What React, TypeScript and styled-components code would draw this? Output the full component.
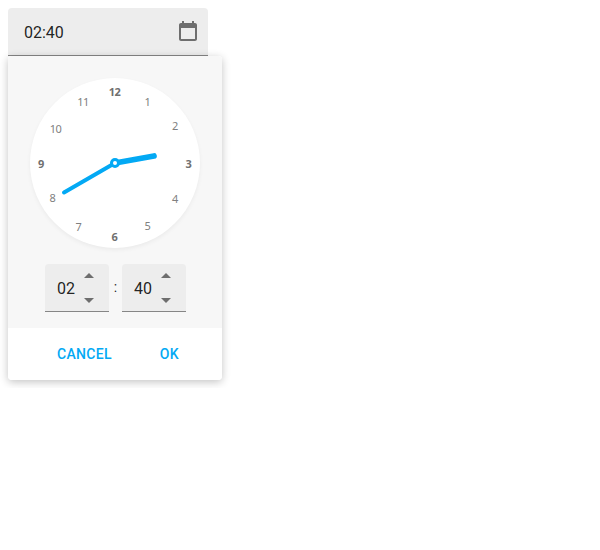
import React from "react";
import styled, { createGlobalStyle } from "styled-components";

const GlobalStyle = createGlobalStyle`
  * { box-sizing: border-box; }
  body { margin: 0; background: #fff; font-family: Roboto, sans-serif; color: rgba(0, 0, 0, 0.87); }
`;

const Page = styled.main`
  display: flex;
  flex-direction: column;
  align-items: flex-start;
  padding: 8px;
`;

const Field = styled.div`
  display: flex;
  align-items: center;
  justify-content: space-between;
  width: 200px;
  height: 48px;
  padding: 0 8px 0 16px;
  background: #ededed;
  border-bottom: 1px solid #868686;
  border-radius: 4px 4px 0 0;
  font-size: 16px;
  line-height: 24px;
`;

const Value = styled.span`
  padding-top: 2px;
`;

const CalendarIcon = styled.svg`
  display: block;
  width: 24px;
  height: 24px;
`;

const Popup = styled.section`
  width: 214px;
  height: 324px;
  background: #fff;
  border-radius: 4px;
  overflow: hidden;
`;

const PopupShadow = styled.div`
  border-radius: 4px;
  box-shadow: 0 2px 8px rgba(0, 0, 0, 0.24);
`;

const TimeView = styled.div`
  display: flex;
  flex-direction: column;
  align-items: center;
  gap: 16px;
  height: 272px;
  padding-top: 22px;
  background: #f7f7f7;
`;

const Dial = styled.svg`
  display: block;
  width: 170px;
  height: 170px;
  border-radius: 50%;
  background: #fff;
  box-shadow: 0 2px 4px rgba(0, 0, 0, 0.05);
`;

const Numeral = styled.text<{ $strong?: boolean }>`
  font-family: "Noto Sans", sans-serif;
  font-size: 11px;
  font-weight: ${({ $strong }) => ($strong ? 700 : 400)};
  fill: ${({ $strong }) => ($strong ? "#707070" : "#808080")};
  letter-spacing: -0.5px;
  text-anchor: middle;
`;

const Spinners = styled.div`
  display: flex;
  align-items: stretch;
  height: 48px;
  padding-left: 1px;
`;

const Separator = styled.span`
  width: 13px;
  padding-top: 13px;
  font-size: 14px;
  line-height: 20px;
  text-align: center;
`;

const NumberBox = styled.div`
  display: flex;
  align-items: center;
  width: 64px;
  padding-left: 12px;
  background: #ededed;
  border-bottom: 1px solid #868686;
  border-radius: 4px 4px 0 0;
  font-size: 16px;
  line-height: 24px;
`;

const Arrows = styled.svg`
  display: block;
  width: 10px;
  height: 30px;
  margin-left: 9px;
`;

const Actions = styled.footer`
  display: flex;
  align-items: center;
  height: 52px;
  padding-left: 49px;
  gap: 48px;
`;

const TextButton = styled.button`
  padding: 0;
  border: 0;
  background: none;
  color: #03a9f4;
  font: 500 14px/20px Roboto, sans-serif;
  letter-spacing: 0.3px;
  text-transform: uppercase;
`;

const numerals = [
  { n: 12, x: 84.5, y: 17.5 },
  { n: 1, x: 117.3, y: 28 },
  { n: 2, x: 144.8, y: 52 },
  { n: 3, x: 158.3, y: 90.3 },
  { n: 4, x: 144.8, y: 125 },
  { n: 5, x: 117.3, y: 152 },
  { n: 6, x: 84.3, y: 162.6 },
  { n: 7, x: 48.3, y: 153.4 },
  { n: 8, x: 22.3, y: 124.2 },
  { n: 9, x: 11, y: 90.3 },
  { n: 10, x: 25.5, y: 55 },
  { n: 11, x: 53, y: 28 },
];

function Clock() {
  return (
    <Dial viewBox="0 0 170 170">
      {numerals.map(({ n, x, y }) => (
        <Numeral key={n} x={x} y={y} $strong={n % 3 === 0}>{n}</Numeral>
      ))}
      <g stroke="#03a9f4" strokeLinecap="round">
        <path d="M85 85L124 78" strokeWidth="5.7" />
        <path d="M85 85L34 114.5" strokeWidth="4" />
        <circle cx="85" cy="85" r="3.5" fill="#fff" strokeWidth="3" />
      </g>
    </Dial>
  );
}

function Spinner({ value }: { value: string }) {
  return (
    <NumberBox>
      <Value>{value}</Value>
      <Arrows viewBox="0 0 10 30" fill="#6e6e6e">
        <path d="M0 5L5 0L10 5Z" />
        <path d="M0 25L5 30L10 25Z" />
      </Arrows>
    </NumberBox>
  );
}

export default function App() {
  return (
    <Page>
      <GlobalStyle />
      <Field>
        <Value>02:40</Value>
        <CalendarIcon viewBox="0 0 24 24" fill="#6e6e6e">
          <path d="M19 3h-1V1h-2v2H8V1H6v2H5c-1.1 0-2 .9-2 2v14c0 1.1.9 2 2 2h14c1.1 0 2-.9 2-2V5c0-1.1-.9-2-2-2zm0 16H5V8h14v11z" />
        </CalendarIcon>
      </Field>
      <PopupShadow>
        <Popup>
          <TimeView>
            <Clock />
            <Spinners>
              <Spinner value="02" />
              <Separator>:</Separator>
              <Spinner value="40" />
            </Spinners>
          </TimeView>
          <Actions>
            <TextButton>Cancel</TextButton>
            <TextButton>OK</TextButton>
          </Actions>
        </Popup>
      </PopupShadow>
    </Page>
  );
}
